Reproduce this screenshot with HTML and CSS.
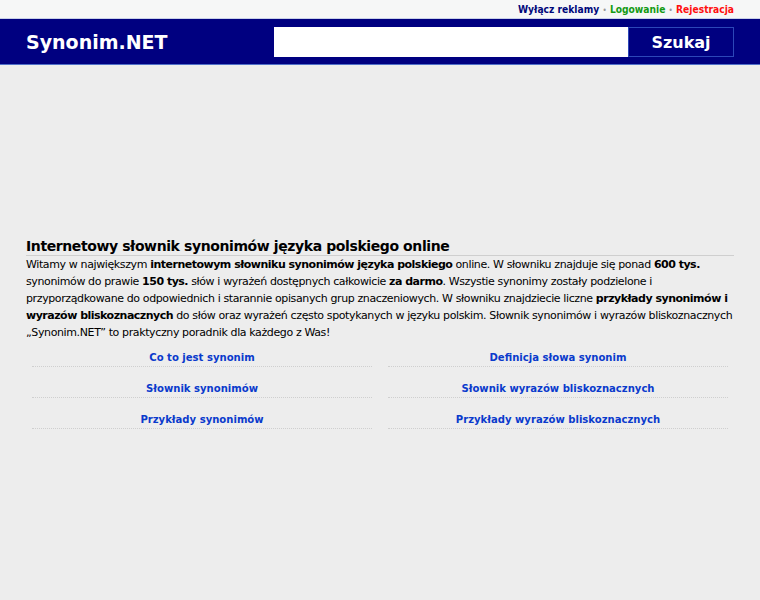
FILE: index.html
```html
<!DOCTYPE html>
<html lang="pl">
<head>
  <meta charset="UTF-8">
  <title>Synonim.NET - słownik synonimów</title>
  <link rel="stylesheet" href="styles.css">
</head>
<body>
  <div class="topbar">
    <div class="wrap top-links">
      <a href="#" class="l-ads">Wyłącz reklamy</a>
      <span class="dot">•</span>
      <a href="#" class="l-login">Logowanie</a>
      <span class="dot">•</span>
      <a href="#" class="l-reg">Rejestracja</a>
    </div>
  </div>

  <div class="header">
    <div class="wrap header-in">
      <a href="#" class="logo">Synonim.NET</a>
      <form class="search">
        <input type="text" name="q">
        <button type="submit">Szukaj</button>
      </form>
    </div>
  </div>

  <div class="ad-space"></div>

  <div class="wrap content">
    <h1>Internetowy słownik synonimów języka polskiego online</h1>
    <p>
      Witamy w największym <b>internetowym słowniku synonimów języka polskiego</b> online. W słowniku znajduje się ponad <b>600 tys.</b>
      synonimów do prawie <b>150 tys.</b> słów i wyrażeń dostępnych całkowicie <b>za darmo</b>. Wszystie synonimy zostały podzielone i
      przyporządkowane do odpowiednich i starannie opisanych grup znaczeniowych. W słowniku znajdziecie liczne <b>przykłady synonimów i
      wyrazów bliskoznacznych</b> do słów oraz wyrażeń często spotykanych w języku polskim. Słownik synonimów i wyrazów bliskoznacznych
      „Synonim.NET” to praktyczny poradnik dla każdego z Was!
    </p>

    <div class="links">
      <a href="#">Co to jest synonim</a>
      <a href="#">Definicja słowa synonim</a>
      <a href="#">Słownik synonimów</a>
      <a href="#">Słownik wyrazów bliskoznacznych</a>
      <a href="#">Przykłady synonimów</a>
      <a href="#">Przykłady wyrazów bliskoznacznych</a>
    </div>
  </div>
</body>
</html>
```

FILE: styles.css
```css
body {
  margin: 0;
  background-color: #ededed;
  font-family: 'DejaVu Sans', Verdana, sans-serif;
  font-size: 11px;
  color: #000;
}
a {
  text-decoration: none;
}
.wrap {
  width: 708px;
  margin: 0 auto;
}
.topbar {
  background-color: #f6f7f7;
  height: 18px;
  border-bottom: 1px solid #c8d0e8;
}
.top-links {
  text-align: right;
  font-family: 'DejaVu Sans Condensed', 'DejaVu Sans', sans-serif;
  font-size: 10.2px;
  font-weight: bold;
  line-height: 19px;
}
.top-links .dot {
  color: #999;
  font-weight: normal;
  font-size: 8px;
}
.l-ads { color: #00087a; }
.l-login { color: #139a13; }
.l-reg { color: #ff1010; }
.header {
  background-color: #000080;
  height: 45px;
  border-bottom: 1px solid #5070c8;
}
.header-in {
  display: flex;
  align-items: center;
  justify-content: space-between;
  height: 45px;
}
.logo {
  color: #fff;
  font-size: 19px;
  font-weight: bold;
}
.search {
  display: flex;
  margin-top: 1px;
}
.search input {
  width: 354px;
  height: 30px;
  box-sizing: border-box;
  border: none;
  background: #fff;
  margin: 0;
}
.search button {
  width: 106px;
  height: 30px;
  background: #000080;
  border: 1px solid #2c47b8;
  color: #fff;
  font-family: 'DejaVu Sans', Verdana, sans-serif;
  font-size: 16px;
  font-weight: bold;
  cursor: pointer;
}
.ad-space {
  height: 171px;
}
.content h1 {
  font-size: 14px;
  letter-spacing: -0.4px;
  margin: 0;
  padding-top: 2px;
  line-height: 17px;
  border-bottom: 1px solid #cfcfcf;
}
.content p {
  margin: 0;
  line-height: 17px;
  letter-spacing: -0.38px;
}
.content p b {
  letter-spacing: -0.5px;
}
.links {
  display: grid;
  grid-template-columns: 1fr 1fr;
  column-gap: 16px;
  row-gap: 5px;
  padding: 0 6px;
}
.links a {
  display: block;
  text-align: center;
  font-family: 'DejaVu Sans Condensed', 'DejaVu Sans', sans-serif;
  font-size: 11.2px;
  color: #0a3acc;
  font-weight: bold;
  padding-top: 8px;
  border-bottom: 1px dotted #cfcfcf;
  line-height: 17px;
}
```
